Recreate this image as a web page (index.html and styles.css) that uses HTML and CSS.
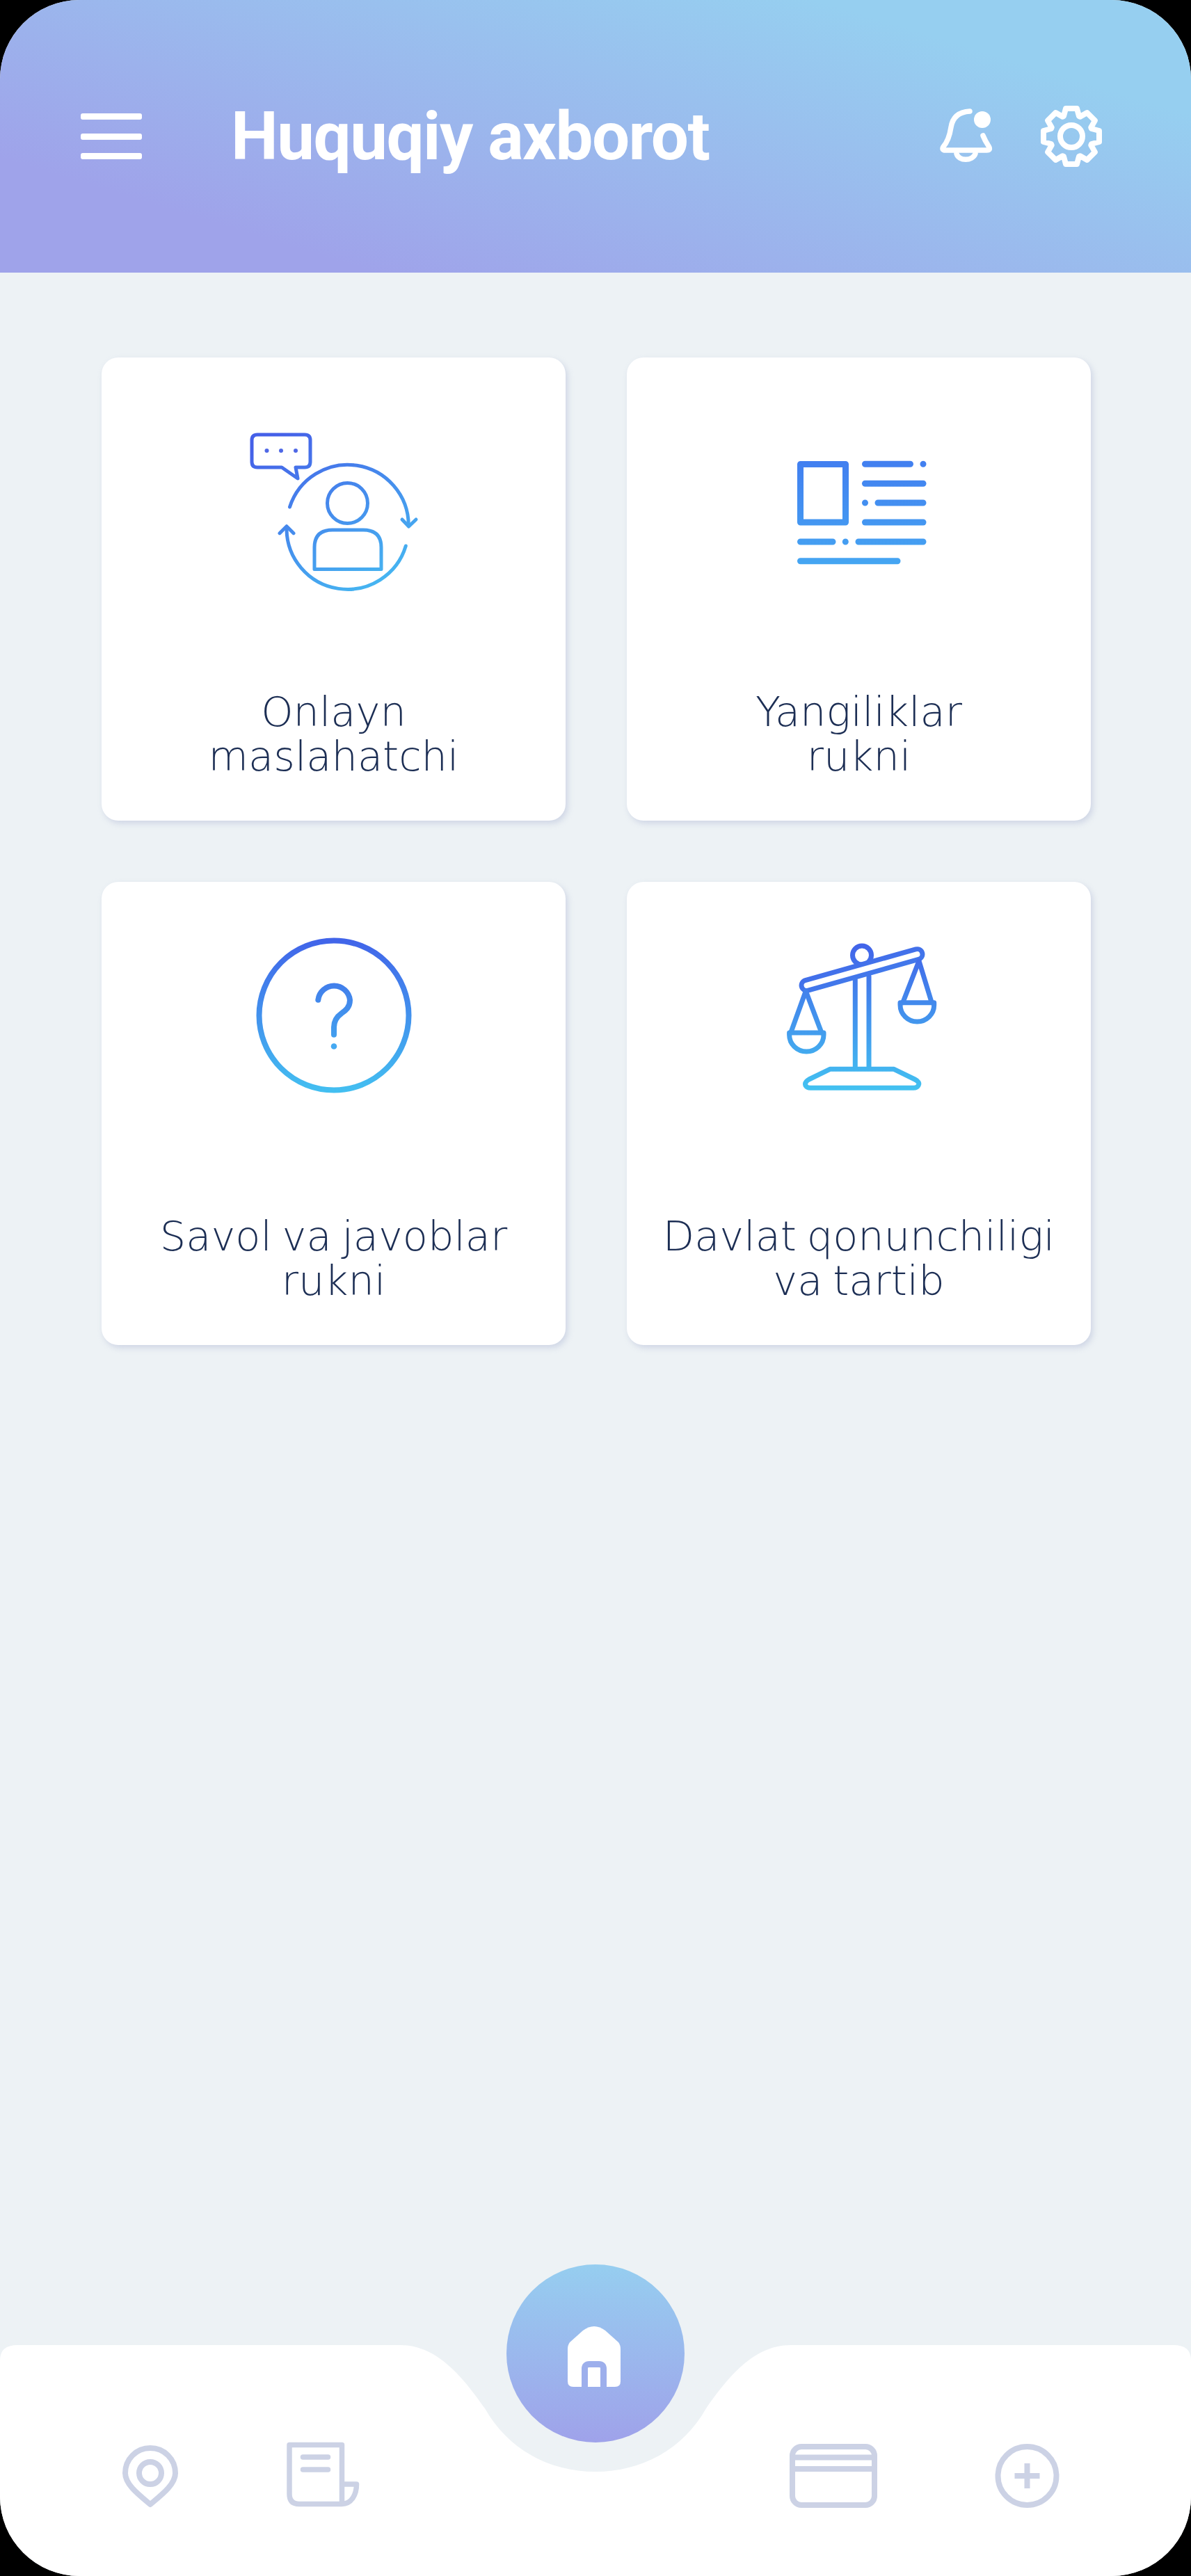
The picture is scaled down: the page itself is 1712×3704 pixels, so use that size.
FILE: index.html
```html
<!DOCTYPE html>
<html>

<head>
    <title>Huquqiy axborot</title>
    <link rel="stylesheet" href="styles.css">
</head>

<body>
    <div class="phone">
        <header class="topbar">
            <div class="menu-btn"><span></span><span></span><span></span></div>
            <h1 class="topbar-title">Huquqiy axborot</h1>
            <div class="topbar-icons">
                <svg class="bell" width="80" height="88" viewBox="30 32 80 88" fill="none" stroke="#fff" stroke-width="7.5" stroke-linecap="round" stroke-linejoin="round">
                    <path d="M74 40C57 41 49 50 47 63C45 76 42 84 36 91Q33 96 39 96H98Q105 96 101 90C97 84 95 80 93 75"/>
                    <path d="M55 101C58 112 78 112 82 101"/>
                    <circle cx="92" cy="52" r="12" fill="#fff" stroke="none"/>
                </svg>
                <svg width="88" height="88" viewBox="-44 -44 88 88" fill="none" stroke="#fff" stroke-width="8" stroke-linejoin="round">
                    <path d="M-11-29L-8-40H8L11-29L12.7-28.3L22.6-33.9L33.9-22.6L28.3-12.7L29-11L40-8V8L29 11L28.3 12.7L33.9 22.6L22.6 33.9L12.7 28.3L11 29L8 40H-8L-11 29L-12.7 28.3L-22.6 33.9L-33.9 22.6L-28.3 12.7L-29 11L-40 8V-8L-29-11L-28.3-12.7L-33.9-22.6L-22.6-33.9L-12.7-28.3Z"/>
                    <circle r="16"/>
                </svg>
            </div>
        </header>

        <main class="content">
            <div class="card">
                <svg class="card-icon" viewBox="0 0 360 320" fill="none" stroke="url(#grad-chat)" stroke-width="5" stroke-linecap="round" stroke-linejoin="round">
                    <defs>
                        <linearGradient id="grad-chat" gradientUnits="userSpaceOnUse" x1="100" y1="44" x2="230" y2="266">
                            <stop offset="0" stop-color="#4560e8"/>
                            <stop offset="1" stop-color="#46b4f1"/>
                        </linearGradient>
                    </defs>
                    <path d="M70 46H138Q146 46 146 54V85Q146 93 138 93H125L128 109L105 93H70Q62 93 62 85V54Q62 46 70 46Z"/>
                    <circle cx="83.5" cy="69" r="3" fill="#4f68e6" stroke="none"/>
                    <circle cx="104" cy="69" r="3" fill="#4f68e6" stroke="none"/>
                    <circle cx="125" cy="69" r="3" fill="#4f68e6" stroke="none"/>
                    <path d="M116.5 150A87.5 87.5 0 0 1 287.3 176"/>
                    <path d="M278 168L287.5 178L298 168"/>
                    <path d="M283.3 206A87.5 87.5 0 0 1 112 180"/>
                    <path d="M102 187.7L112 177.7L122 187.7"/>
                    <circle cx="199.5" cy="144.5" r="29"/>
                    <path d="M152 239.5V208Q152 183 178 183H222Q248 183 248 208V239.5Z"/>
                </svg>
                <p class="card-label">Onlayn<br>maslahatchi</p>
            </div>

            <div class="card">
                <svg class="card-icon" viewBox="-46 -40 360 320" fill="none" stroke="url(#grad-news)" stroke-width="9" stroke-linecap="round" stroke-linejoin="round">
                    <defs>
                        <linearGradient id="grad-news" gradientUnits="userSpaceOnUse" x1="0" y1="44" x2="0" y2="193">
                            <stop offset="0" stop-color="#427ff0"/>
                            <stop offset="1" stop-color="#45a6f2"/>
                        </linearGradient>
                    </defs>
                    <rect x="49.5" y="48.5" width="65" height="83.5"/>
                    <path d="M142.5 48.3H207.5M226 48.3H226.01"/>
                    <path d="M142.5 76.3H226"/>
                    <path d="M142.5 104H142.51M161 104H226"/>
                    <path d="M142.5 132H226"/>
                    <path d="M49.5 160H96M114.3 160H114.31M133 160H226"/>
                    <path d="M49.5 187.7H189"/>
                </svg>
                <p class="card-label">Yangiliklar<br>rukni</p>
            </div>

            <div class="card">
                <svg class="card-icon" viewBox="-40 13 360 320" fill="none" stroke="url(#grad-help)" stroke-width="8" stroke-linecap="round" stroke-linejoin="round">
                    <defs>
                        <linearGradient id="grad-help" gradientUnits="userSpaceOnUse" x1="0" y1="28" x2="0" y2="252">
                            <stop offset="0" stop-color="#4163e9"/>
                            <stop offset="1" stop-color="#43c0f1"/>
                        </linearGradient>
                    </defs>
                    <circle cx="140" cy="140" r="107.5"/>
                    <path d="M117.3 117.7A23 23 0 0 1 163 118C163 128 157 133 151 137C144 142 140 148 140 157V167.7"/>
                    <circle cx="140" cy="184.5" r="4.3" fill="#45a9f2" stroke="none"/>
                </svg>
                <p class="card-label">Savol va javoblar<br>rukni</p>
            </div>

            <div class="card">
                <svg class="card-icon" viewBox="-46 3 360 320" fill="none" stroke="url(#grad-law)" stroke-width="7" stroke-linecap="round" stroke-linejoin="round">
                    <defs>
                        <linearGradient id="grad-law" gradientUnits="userSpaceOnUse" x1="0" y1="27" x2="0" y2="238">
                            <stop offset="0" stop-color="#4263e9"/>
                            <stop offset="1" stop-color="#43c2f1"/>
                        </linearGradient>
                    </defs>
                    <circle cx="138" cy="43.5" r="13.5"/>
                    <rect x="48" y="57" width="180" height="15" rx="7.5" fill="#fff" transform="rotate(-15.7 138 64.5)"/>
                    <path d="M128.3 79V205M148 74V205"/>
                    <path d="M92 207.3H184L214 222Q222 226 219 231Q217 234.3 212 234.3H64Q59 234.3 57 231Q55 226 62 222Z"/>
                    <path d="M57.3 95L35.7 155M57.3 95L80 155"/>
                    <path d="M33.6 155H83V158A24.7 24 0 0 1 33.6 158Z"/>
                    <path d="M220 51.7L196.7 111.7M220 51.7L238.3 111.7"/>
                    <path d="M193 111.7H241.7V115A24.3 24 0 0 1 193 115Z"/>
                </svg>
                <p class="card-label">Davlat qonunchiligi<br>va tartib</p>
            </div>
        </main>

        <nav class="bottom-nav">
            <svg class="nav-shape" width="1712" height="332" viewBox="0 0 1712 332">
                <path fill="#fff" d="M0 22Q0 0 25 0H576C630 0 668 50 697 91C730 150 790 182 856 182C922 182 982 150 1015 91C1044 50 1082 0 1136 0H1687Q1712 0 1712 22V332H0Z"/>
            </svg>

            <div class="nav-group nav-group-left">
                <svg width="88" height="100" viewBox="0 0 88 100" fill="none" stroke="#ccd2e5" stroke-width="8" stroke-linejoin="round">
                    <path d="M44 91C26 76 8 62 8 46C8 26 24 10 44 10C64 10 80 26 80 46C80 62 62 76 44 91Z"/>
                    <circle cx="44" cy="46" r="16"/>
                </svg>
                <svg width="112" height="100" viewBox="0 0 112 100" fill="none" stroke="#ccd2e5" stroke-width="7.5" stroke-linejoin="round">
                    <path d="M83.5 90.5V5.5H8V76Q8 90.5 22 90.5H83C98 90.5 104.5 76 104.5 62H83.5"/>
                    <path d="M27.5 23H63.5M27.5 41H63.5" stroke-linecap="round"/>
                </svg>
            </div>

            <button class="home-btn">
                <svg width="96" height="96" viewBox="0 0 96 96">
                    <path fill="#fff" d="M8 38Q8 32 11 28L30 11Q46 -1 62 11L81 28Q84 32 84 38V84Q84 92 76 92H16Q8 92 8 84Z"/>
                    <path fill="none" stroke="#9dafec" stroke-width="9" d="M32.5 92V66Q32.5 59.5 39 59.5H53Q59.5 59.5 59.5 66V92"/>
                </svg>
            </button>

            <div class="nav-group nav-group-right">
                <svg width="134" height="100" viewBox="0 0 134 100" fill="none" stroke="#ccd2e5" stroke-width="8">
                    <rect x="8" y="8" width="118" height="84" rx="13"/>
                    <path d="M8 23.5H126M8 40H126"/>
                </svg>
                <svg width="100" height="100" viewBox="0 0 100 100" fill="none" stroke="#ccd2e5" stroke-width="8">
                    <circle cx="50.5" cy="50" r="42"/>
                    <path d="M32.5 50H68.5M50.5 32V68"/>
                </svg>
            </div>
        </nav>
    </div>
</body>

</html>
```

FILE: styles.css
```css
body {
    margin: 0;
    background: #000;
}

.phone {
    position: relative;
    display: flex;
    flex-direction: column;
    height: 3704px;
    overflow: hidden;
    border-radius: 114px;
    background: #edf2f5;
}

.topbar {
    display: flex;
    align-items: center;
    flex-shrink: 0;
    height: 392px;
    padding: 0 128px 0 116px;
    box-sizing: border-box;
    background: linear-gradient(17deg, #9fa3ea 18%, #96cff0 82%);
}

.menu-btn {
    display: flex;
    flex-direction: column;
    gap: 19.5px;
    width: 88px;
    margin-right: 128px;
}

.menu-btn span {
    height: 9px;
    border-radius: 3px;
    background: #fff;
}

.topbar-title {
    margin: 0;
    color: #fff;
    font-family: Roboto, sans-serif;
    font-size: 96px;
    font-weight: 700;
    letter-spacing: -1.5px;
}

.topbar-icons {
    display: flex;
    gap: 66px;
    margin-left: auto;
}

.content {
    display: grid;
    grid-template-columns: 667px 667px;
    grid-auto-rows: 666px;
    gap: 88px;
    flex: 1;
    padding: 122px 144px 0 146px;
}

.card {
    display: flex;
    flex-direction: column;
    align-items: center;
    border-radius: 24px;
    background: #fff;
    box-shadow: 3px 4px 8px rgba(170, 180, 210, 0.45);
}

.card-icon {
    width: 360px;
    height: 320px;
    margin-top: 65px;
}

.card-label {
    margin: 93px 0 0;
    color: #1c2e54;
    font-family: "DejaVu Sans", sans-serif;
    font-size: 59px;
    font-weight: 200;
    line-height: 64px;
    word-spacing: -4px;
    text-align: center;
}

.bottom-nav {
    position: absolute;
    left: 0;
    right: 0;
    bottom: 0;
    display: flex;
    justify-content: space-between;
    align-items: center;
    height: 332px;
    padding: 138px 186px 94px 172px;
    box-sizing: border-box;
}

.nav-shape {
    position: absolute;
    left: 0;
    top: 0;
}

.nav-group {
    position: relative;
    display: flex;
    align-items: center;
}

.nav-group-left {
    gap: 148px;
}

.nav-group-right {
    gap: 161px;
}

.home-btn {
    position: absolute;
    left: 728px;
    top: -116px;
    width: 256px;
    height: 256px;
    padding: 8px 0 0;
    box-sizing: border-box;
    display: flex;
    align-items: center;
    justify-content: center;
    border: none;
    border-radius: 50%;
    background: linear-gradient(180deg, #96cef0, #9fa2ea);
}
```
